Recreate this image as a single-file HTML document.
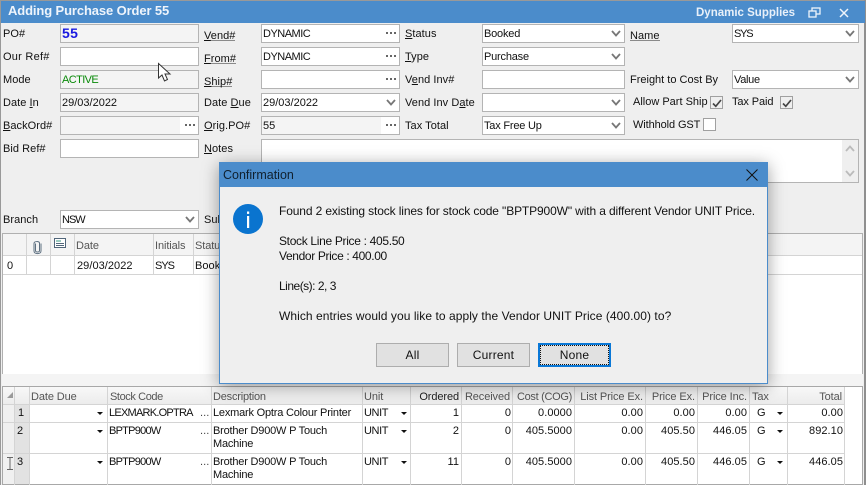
<!DOCTYPE html>
<html><head><meta charset="utf-8">
<style>
html,body{margin:0;padding:0}
body{width:866px;height:485px;overflow:hidden;position:relative;background:#efefef;font:11px/16px "Liberation Sans",sans-serif;color:#111}
div,svg{position:absolute;box-sizing:border-box}
.t{white-space:nowrap;height:16px;letter-spacing:.05px;margin-top:1px}
.f{height:19px;border:1px solid #b4b4b4;background:#fff;padding:1px 1px;white-space:nowrap;letter-spacing:-.2px}
.g{background:#f4f4f4}
.d{right:11px;top:7px;width:2px;height:2px;background:#666;box-shadow:4px 0 #666,8px 0 #666}
.dw{position:absolute;right:0;top:0;bottom:0;width:18px;background:#fff}
.lnk{border-bottom:1px solid #8a8a8a;height:13px}
.ch{position:absolute;right:3px;top:5px;width:10px;height:7px}
.cb{width:13px;height:13px;border:1px solid #a0a0a0;background:#fff}
.vl{width:1px;background:#d4d4d4}
.hl{height:1px;background:#d4d4d4}
.r{text-align:right}
.gh{color:#555;letter-spacing:-.1px}
.x{letter-spacing:-.2px}
.c{letter-spacing:-.75px}
.m{font-size:12px;color:#111;margin-top:0}
.btn{width:73px;height:24px;border:1px solid #adadad;background:#e1e1e1;text-align:center;line-height:22px;color:#111;font-size:12px;letter-spacing:.2px}
.ar{width:0;height:0;border-left:3px solid transparent;border-right:3px solid transparent;border-top:3px solid #111;margin-top:1px}
</style></head><body>

<!-- window frame -->
<div style="left:0;top:0;width:866px;height:1px;background:#999"></div>
<div style="left:0;top:0;width:1px;height:485px;background:#999"></div>
<div style="right:0;top:0;width:2px;height:485px;background:#8f8f8f"></div>
<div style="left:1px;top:1px;width:864px;height:22px;background:#4b8ccb"></div>
<div class="t" style="left:8px;top:3px;margin-top:0;color:#eef4fb;font-size:13px;font-weight:bold;letter-spacing:-.12px">Adding Purchase Order 55</div>
<div class="t" style="left:696px;top:5px;margin-top:0;color:#e8f0f9;font-size:11.5px;font-weight:bold;letter-spacing:0">Dynamic Supplies</div>
<svg style="left:808px;top:7px" width="14" height="12" viewBox="0 0 14 12" fill="none" stroke="#eef4fb" stroke-width="1.3"><rect x="4" y="1" width="8" height="6"/><rect x="1" y="4" width="7" height="6" fill="#4b8ccb"/></svg>
<svg style="left:839px;top:8px" width="10" height="10" viewBox="0 0 10 10" stroke="#eef4fb" stroke-width="1.5"><path d="M1 1L9 9M9 1L1 9"/></svg>

<!-- column 1 -->
<div class="t" style="left:3px;top:25px">PO#</div>
<div class="f g" style="left:60px;top:24px;width:139px;color:#1a1ae0;font-size:14px;font-weight:bold;letter-spacing:.4px;padding-left:1px;padding-top:0">55</div>
<div class="t" style="left:3px;top:48px;letter-spacing:.25px">Our Ref#</div>
<div class="f" style="left:60px;top:47px;width:139px"></div>
<div class="t" style="left:3px;top:71px">Mode</div>
<div class="f g" style="left:60px;top:70px;width:139px;color:#0a8a0a;letter-spacing:-.6px">ACTIVE</div>
<div class="t" style="left:3px;top:94px">Date <u>I</u>n</div>
<div class="f g" style="left:60px;top:93px;width:139px;letter-spacing:0">29/03/2022</div>
<div class="t" style="left:3px;top:117px"><u>B</u>ackOrd#</div>
<div class="f g" style="left:60px;top:116px;width:139px"><div class="dw"></div><div class="d"></div></div>
<div class="t" style="left:3px;top:140px">Bid Ref#</div>
<div class="f" style="left:60px;top:139px;width:139px"></div>
<div class="t" style="left:3px;top:211px">Branch</div>
<div class="f" style="left:60px;top:210px;width:139px;letter-spacing:-1px">NSW<svg class="ch" viewBox="0 0 10 7" fill="none" stroke="#777" stroke-width="1.8"><path d="M1 1L5 5.5L9 1"/></svg></div>

<!-- column 2 -->
<div class="t lnk" style="left:204px;top:27px"><u>V</u>end#</div>
<div class="f" style="left:261px;top:24px;width:139px;letter-spacing:-.5px">DYNAMIC<div class="d"></div></div>
<div class="t lnk" style="left:204px;top:50px"><u>F</u>rom#</div>
<div class="f" style="left:261px;top:47px;width:139px;letter-spacing:-.5px">DYNAMIC<div class="d"></div></div>
<div class="t lnk" style="left:204px;top:73px"><u>S</u>hip#</div>
<div class="f" style="left:261px;top:70px;width:139px"><div class="d"></div></div>
<div class="t" style="left:204px;top:94px">Date <u>D</u>ue</div>
<div class="f" style="left:261px;top:93px;width:139px;letter-spacing:0">29/03/2022<svg class="ch" viewBox="0 0 10 7" fill="none" stroke="#777" stroke-width="1.8"><path d="M1 1L5 5.5L9 1"/></svg></div>
<div class="t" style="left:204px;top:117px"><u>O</u>rig.PO#</div>
<div class="f g" style="left:261px;top:116px;width:139px;letter-spacing:0">55<div class="dw"></div><div class="d"></div></div>
<div class="t" style="left:204px;top:140px"><u>N</u>otes</div>
<div class="f" style="left:261px;top:139px;width:598px;height:44px"></div>
<div style="left:842px;top:140px;width:16px;height:42px;background:#efefef"></div>
<svg style="left:845px;top:145px" width="10" height="7" viewBox="0 0 10 7" fill="none" stroke="#bbb" stroke-width="1.8"><path d="M1 6L5 1.5L9 6"/></svg>
<svg style="left:845px;top:170px" width="10" height="7" viewBox="0 0 10 7" fill="none" stroke="#bbb" stroke-width="1.8"><path d="M1 1L5 5.5L9 1"/></svg>
<div class="t" style="left:204px;top:211px">Sub</div>

<!-- column 3 -->
<div class="t" style="left:405px;top:25px"><u>S</u>tatus</div>
<div class="f" style="left:482px;top:24px;width:143px">Booked<svg class="ch" viewBox="0 0 10 7" fill="none" stroke="#777" stroke-width="1.8"><path d="M1 1L5 5.5L9 1"/></svg></div>
<div class="t" style="left:405px;top:48px"><u>T</u>ype</div>
<div class="f" style="left:482px;top:47px;width:143px">Purchase<svg class="ch" viewBox="0 0 10 7" fill="none" stroke="#777" stroke-width="1.8"><path d="M1 1L5 5.5L9 1"/></svg></div>
<div class="t" style="left:405px;top:71px">V<u>e</u>nd Inv#</div>
<div class="f" style="left:482px;top:70px;width:143px"></div>
<div class="t" style="left:405px;top:94px">Vend Inv D<u>a</u>te</div>
<div class="f" style="left:482px;top:93px;width:143px"><svg class="ch" viewBox="0 0 10 7" fill="none" stroke="#777" stroke-width="1.8"><path d="M1 1L5 5.5L9 1"/></svg></div>
<div class="t" style="left:405px;top:117px">Tax Total</div>
<div class="f" style="left:482px;top:116px;width:143px">Tax Free Up<svg class="ch" viewBox="0 0 10 7" fill="none" stroke="#777" stroke-width="1.8"><path d="M1 1L5 5.5L9 1"/></svg></div>

<!-- column 4 -->
<div class="t lnk" style="left:630px;top:27px">Name</div>
<div class="f" style="left:732px;top:24px;width:127px;letter-spacing:-1.2px">SYS<svg class="ch" viewBox="0 0 10 7" fill="none" stroke="#777" stroke-width="1.8"><path d="M1 1L5 5.5L9 1"/></svg></div>
<div class="t" style="left:630px;top:71px;letter-spacing:0">Freight to Cost By</div>
<div class="f" style="left:732px;top:70px;width:127px;letter-spacing:-.3px">Value<svg class="ch" viewBox="0 0 10 7" fill="none" stroke="#777" stroke-width="1.8"><path d="M1 1L5 5.5L9 1"/></svg></div>
<div class="t" style="left:633px;top:93px;letter-spacing:0">Allow Part Ship</div>
<div class="cb" style="left:710px;top:96px;background:#efefef"></div>
<svg style="left:712px;top:99px" width="10" height="9" viewBox="0 0 10 9" fill="none" stroke="#444" stroke-width="1.7"><path d="M1 4.5L3.8 7.3L9 1"/></svg>
<div class="t" style="left:732px;top:93px;letter-spacing:-.1px">Tax Paid</div>
<div class="cb" style="left:780px;top:96px;background:#efefef"></div>
<svg style="left:782px;top:99px" width="10" height="9" viewBox="0 0 10 9" fill="none" stroke="#444" stroke-width="1.7"><path d="M1 4.5L3.8 7.3L9 1"/></svg>
<div class="t" style="left:633px;top:116px;letter-spacing:-.1px">Withhold GST</div>
<div class="cb" style="left:703px;top:118px"></div>

<!-- middle grid -->
<div style="left:2px;top:233px;width:861px;height:141px;background:#fff;border:1px solid #b0b0b0;border-bottom:0"></div>
<div style="left:2px;top:374px;width:861px;height:12px;background:#f4f4f4"></div>
<div style="left:3px;top:234px;width:859px;height:22px;background:#f4f4f4"></div>
<div class="hl" style="left:3px;top:255px;width:859px"></div>
<div class="hl" style="left:3px;top:274px;width:859px"></div>
<div class="vl" style="left:26px;top:234px;height:41px"></div>
<div class="vl" style="left:50px;top:234px;height:41px"></div>
<div class="vl" style="left:74px;top:234px;height:41px"></div>
<div class="vl" style="left:153px;top:234px;height:41px"></div>
<div class="vl" style="left:193px;top:234px;height:41px"></div>
<svg style="left:33px;top:240px" width="9" height="15" viewBox="0 0 9 15" fill="none" stroke="#5d6f80" stroke-width="1"><path d="M2.5 3.5V10.5C2.5 12.5 6.5 12.5 6.5 10.5V3C6.5 1 1 1 1 3.5V11C1 14.5 8 14.5 8 11V3.5"/></svg>
<svg style="left:54px;top:238px" width="12" height="11" viewBox="0 0 12 11"><rect x=".5" y=".5" width="11" height="9" fill="#fff" stroke="#51667a"/><path d="M2 3H7" stroke="#3a9a80"/><path d="M2 5.5H10M2 7.5H10" stroke="#51667a"/></svg>
<div class="t gh" style="left:76px;top:237px">Date</div>
<div class="t gh" style="left:155px;top:237px">Initials</div>
<div class="t gh" style="left:195px;top:237px">Statu</div>
<div class="t" style="left:7px;top:257px">0</div>
<div class="t" style="left:77px;top:257px">29/03/2022</div>
<div class="t" style="left:155px;top:257px;letter-spacing:-1px">SYS</div>
<div class="t" style="left:195px;top:257px">Book</div>

<!-- bottom grid -->
<div style="left:2px;top:386px;width:861px;height:99px;background:#fff;border:1px solid #a8a8a8"></div>
<div style="left:3px;top:387px;width:842px;height:17px;background:linear-gradient(#f8f8f8,#ececec)"></div>
<div style="left:3px;top:404px;width:11px;height:81px;background:#f0f0f0"></div>
<div style="left:14px;top:404px;width:15px;height:81px;background:#e2e2e2"></div>
<div class="hl" style="left:3px;top:404px;width:842px"></div>
<div class="hl" style="left:3px;top:422px;width:842px"></div>
<div class="hl" style="left:3px;top:453px;width:842px"></div>
<div class="hl" style="left:3px;top:484px;width:860px;background:#a8a8a8"></div>
<div class="vl" style="left:14px;top:387px;height:98px"></div>
<div class="vl" style="left:29px;top:387px;height:98px"></div>
<div class="vl" style="left:107px;top:387px;height:98px"></div>
<div class="vl" style="left:211px;top:387px;height:98px"></div>
<div class="vl" style="left:362px;top:387px;height:98px"></div>
<div class="vl" style="left:410px;top:387px;height:98px"></div>
<div class="vl" style="left:461px;top:387px;height:98px"></div>
<div class="vl" style="left:512px;top:387px;height:98px"></div>
<div class="vl" style="left:574px;top:387px;height:98px"></div>
<div class="vl" style="left:645px;top:387px;height:98px"></div>
<div class="vl" style="left:697px;top:387px;height:98px"></div>
<div class="vl" style="left:749px;top:387px;height:98px"></div>
<div class="vl" style="left:787px;top:387px;height:98px"></div>
<div class="vl" style="left:844px;top:387px;height:98px"></div>
<svg style="left:7px;top:392px" width="7" height="7" viewBox="0 0 7 7"><path d="M6 0V6H0Z" fill="#9a9a9a"/></svg>

<div class="t gh" style="left:31px;top:388px">Date Due</div>
<div class="t gh" style="left:110px;top:388px;letter-spacing:-.4px">Stock Code</div>
<div class="t gh" style="left:213px;top:388px;letter-spacing:-.2px">Description</div>
<div class="t gh" style="left:364px;top:388px">Unit</div>
<div class="t r" style="left:410px;top:388px;width:49px;color:#222;letter-spacing:-.1px">Ordered</div>
<div class="t r gh" style="left:461px;top:388px;width:49px">Received</div>
<div class="t r gh" style="left:512px;top:388px;width:60px;letter-spacing:-.3px">Cost (COG)</div>
<div class="t r gh" style="left:574px;top:388px;width:69px">List Price Ex.</div>
<div class="t r gh" style="left:645px;top:388px;width:50px">Price Ex.</div>
<div class="t r gh" style="left:697px;top:388px;width:50px">Price Inc.</div>
<div class="t gh" style="left:752px;top:388px">Tax</div>
<div class="t r gh" style="left:787px;top:388px;width:55px">Total</div>

<div style="left:0;top:-1px;width:866px;height:486px">
<!-- row 1 -->
<div class="t" style="left:18px;top:405px">1</div>
<div class="ar" style="left:97px;top:412px"></div>
<div class="t c" style="left:109px;top:405px">LEXMARK.OPTRA</div>
<div class="t" style="left:200px;top:405px;color:#444">...</div>
<div class="t x" style="left:213px;top:405px">Lexmark Optra Colour Printer</div>
<div class="t" style="left:364px;top:405px;letter-spacing:-.4px">UNIT</div>
<div class="ar" style="left:401px;top:412px"></div>
<div class="t r" style="left:410px;top:405px;width:49px">1</div>
<div class="t r" style="left:461px;top:405px;width:50px">0</div>
<div class="t r" style="left:512px;top:405px;width:60px">0.0000</div>
<div class="t r" style="left:574px;top:405px;width:69px">0.00</div>
<div class="t r" style="left:645px;top:405px;width:50px">0.00</div>
<div class="t r" style="left:697px;top:405px;width:50px">0.00</div>
<div class="t" style="left:757px;top:405px">G</div>
<div class="ar" style="left:777px;top:412px"></div>
<div class="t r" style="left:787px;top:405px;width:56px">0.00</div>
<!-- row 2 -->
<div class="t" style="left:17px;top:423px">2</div>
<div class="ar" style="left:97px;top:430px"></div>
<div class="t c" style="left:109px;top:423px">BPTP900W</div>
<div class="t" style="left:200px;top:423px;color:#444">...</div>
<div class="t x" style="left:213px;top:423px">Brother D900W P Touch</div>
<div class="t x" style="left:213px;top:436px">Machine</div>
<div class="t" style="left:364px;top:423px;letter-spacing:-.4px">UNIT</div>
<div class="ar" style="left:401px;top:430px"></div>
<div class="t r" style="left:410px;top:423px;width:49px">2</div>
<div class="t r" style="left:461px;top:423px;width:50px">0</div>
<div class="t r" style="left:512px;top:423px;width:60px">405.5000</div>
<div class="t r" style="left:574px;top:423px;width:69px">0.00</div>
<div class="t r" style="left:645px;top:423px;width:50px">405.50</div>
<div class="t r" style="left:697px;top:423px;width:50px">446.05</div>
<div class="t" style="left:757px;top:423px">G</div>
<div class="ar" style="left:777px;top:430px"></div>
<div class="t r" style="left:787px;top:423px;width:56px">892.10</div>
<!-- row 3 -->
<div class="t" style="left:17px;top:454px">3</div>
<div class="ar" style="left:97px;top:461px"></div>
<div class="t c" style="left:109px;top:454px">BPTP900W</div>
<div class="t" style="left:200px;top:454px;color:#444">...</div>
<div class="t x" style="left:213px;top:454px">Brother D900W P Touch</div>
<div class="t x" style="left:213px;top:467px">Machine</div>
<div class="t" style="left:364px;top:454px;letter-spacing:-.4px">UNIT</div>
<div class="ar" style="left:401px;top:461px"></div>
<div class="t r" style="left:410px;top:454px;width:49px">11</div>
<div class="t r" style="left:461px;top:454px;width:50px">0</div>
<div class="t r" style="left:512px;top:454px;width:60px">405.5000</div>
<div class="t r" style="left:574px;top:454px;width:69px">0.00</div>
<div class="t r" style="left:645px;top:454px;width:50px">405.50</div>
<div class="t r" style="left:697px;top:454px;width:50px">446.05</div>
<div class="t" style="left:757px;top:454px">G</div>
<div class="ar" style="left:777px;top:461px"></div>
<div class="t r" style="left:787px;top:454px;width:56px">446.05</div>
</div>
<svg style="left:7px;top:457px" width="6" height="13" viewBox="0 0 6 13" fill="none" stroke="#666"><path d="M0 .5H6M3 .5V12.5M0 12.5H6"/></svg>

<!-- mouse cursor -->
<svg style="left:157px;top:62px" width="15" height="21" viewBox="0 0 15 21"><path d="M1.5 1.5V16L5 13L7.5 19L10.5 17.5L8 12H13Z" fill="#fff" stroke="#333" stroke-width="1"/></svg>

<!-- dialog -->
<div style="left:219px;top:162px;width:549px;height:222px;background:#efefef;border:1px solid #4b8ccb;box-shadow:0 3px 16px rgba(0,0,0,.38)"></div>
<div style="left:220px;top:163px;width:547px;height:24px;background:#4b8ccb"></div>
<div class="t" style="left:223px;top:167px;margin-top:0;color:#10202e;font-size:12.5px;letter-spacing:0">Confirmation</div>
<svg style="left:746px;top:169px" width="12" height="12" viewBox="0 0 12 12" stroke="#111" stroke-width="1"><path d="M.5 .5L11.5 11.5M11.5 .5L.5 11.5"/></svg>
<svg style="left:233px;top:204px" width="30" height="30" viewBox="0 0 30 30"><circle cx="15" cy="15" r="15" fill="#0a74cf"/><rect x="14" y="12" width="2.2" height="12" fill="#fff"/><rect x="14" y="7.5" width="2.2" height="2.4" fill="#fff"/></svg>
<div class="t m" style="left:279px;top:203px;letter-spacing:-.13px">Found 2 existing stock lines for stock code "BPTP900W" with a different Vendor UNIT Price.</div>
<div class="t m" style="left:279px;top:233px;letter-spacing:-.32px">Stock Line Price : 405.50</div>
<div class="t m" style="left:279px;top:248px;letter-spacing:-.36px">Vendor Price : 400.00</div>
<div class="t m" style="left:279px;top:278px;letter-spacing:-.5px">Line(s): 2, 3</div>
<div class="t m" style="left:279px;top:308px;letter-spacing:.06px">Which entries would you like to apply the Vendor UNIT Price (400.00) to?</div>
<div class="btn" style="left:376px;top:343px">All</div>
<div class="btn" style="left:457px;top:343px">Current</div>
<div class="btn" style="left:538px;top:343px;border:2px solid #0a78d7;line-height:20px"><div style="left:0;top:0;right:0;bottom:0;border:1px dotted #111"></div>None</div>

</body></html>
